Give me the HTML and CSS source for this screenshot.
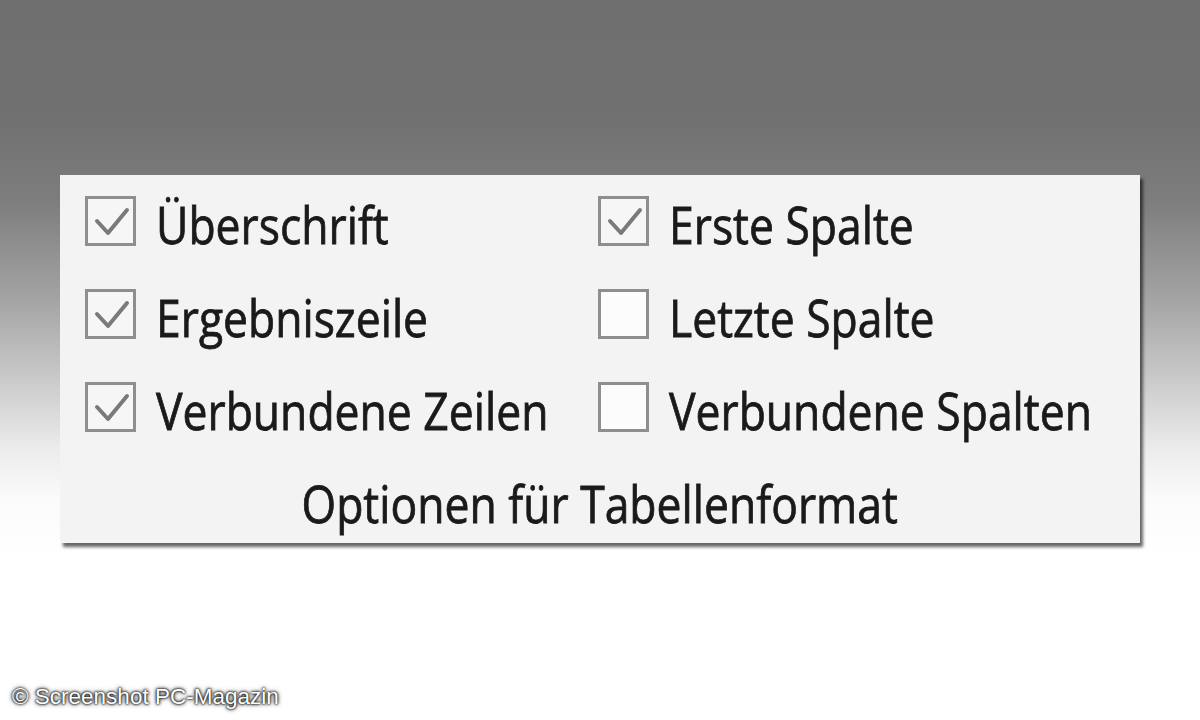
FILE: index.html
```html
<!DOCTYPE html>
<html lang="de">
<head>
<meta charset="utf-8">
<title>Optionen für Tabellenformat</title>
<link rel="stylesheet" href="styles.css">
</head>
<body>
<div class="stage">
  <section class="panel">
    <div class="grid">
      <div class="opt"><span class="box checked"><svg viewBox="0 0 51 50"><path d="M12 25 L23 37 L42 14"/></svg></span><span class="lbl">Überschrift</span></div>
      <div class="opt"><span class="box checked"><svg viewBox="0 0 51 50"><path d="M12 25 L23 37 L42 14"/></svg></span><span class="lbl">Erste Spalte</span></div>
      <div class="opt"><span class="box checked"><svg viewBox="0 0 51 50"><path d="M12 25 L23 37 L42 14"/></svg></span><span class="lbl">Ergebniszeile</span></div>
      <div class="opt"><span class="box"></span><span class="lbl">Letzte Spalte</span></div>
      <div class="opt"><span class="box checked"><svg viewBox="0 0 51 50"><path d="M12 25 L23 37 L42 14"/></svg></span><span class="lbl">Verbundene Zeilen</span></div>
      <div class="opt"><span class="box"></span><span class="lbl">Verbundene Spalten</span></div>
    </div>
    <div class="title"><span class="lbl">Optionen für Tabellenformat</span></div>
  </section>
  <div class="credit">© Screenshot PC-Magazin</div>
</div>
</body>
</html>
```
FILE: styles.css
```css
html, body {
  margin: 0;
  padding: 0;
}
body {
  width: 1200px;
  height: 720px;
  overflow: hidden;
  background: linear-gradient(180deg, #6f6f6f 0px, #717171 120px, #7d7d7d 200px, #a4a4a4 300px, #cfcfcf 390px, #ececec 450px, #fbfbfb 500px, #ffffff 560px);
  font-family: "Open Sans", "Noto Sans", sans-serif;
}
.stage {
  position: relative;
  width: 1200px;
  height: 720px;
  padding: 175px 0 0 60px;
  box-sizing: border-box;
}
.panel {
  width: 1080px;
  height: 368px;
  box-sizing: border-box;
  background: #f3f3f3;
  box-shadow: 3px 4px 3px rgba(0,0,0,0.6);
  padding: 21px 0 0 25px;
  display: flex;
  flex-direction: column;
}
.grid {
  display: grid;
  grid-template-columns: 513px auto;
  row-gap: 43px;
}
.opt {
  display: flex;
  align-items: flex-start;
  gap: 20px;
  height: 50px;
}
.box {
  flex: none;
  width: 51px;
  height: 50px;
  box-sizing: border-box;
  border: 3px solid #8e8e8e;
  background: #fcfcfc;
  position: relative;
}
.box.checked {
  background: #f6f6f6;
}
.box svg {
  position: absolute;
  left: -3px;
  top: -3px;
  width: 51px;
  height: 50px;
}
.box svg path {
  fill: none;
  stroke: #7a7a7a;
  stroke-width: 4;
  stroke-linecap: round;
  stroke-linejoin: round;
}
.lbl {
  display: inline-block;
  font-size: 52px;
  font-weight: 400;
  line-height: 50px;
  margin-top: 3px;
  color: #1a1a1a;
  -webkit-text-stroke: 0.8px #1a1a1a;
  white-space: nowrap;
  transform: scaleX(0.855);
  transform-origin: left center;
}
.title {
  margin-top: 43px;
  text-align: center;
  padding-right: 25px;
}
.title .lbl {
  transform-origin: center center;
}
.credit {
  position: absolute;
  left: 12px;
  top: 684px;
  font-family: "Liberation Sans", Arial, sans-serif;
  font-size: 22.5px;
  line-height: 26px;
  color: #ffffff;
  text-shadow: 0 0 2px #000, 0 0 3px #111, 0 0 5px #333;
}
```
